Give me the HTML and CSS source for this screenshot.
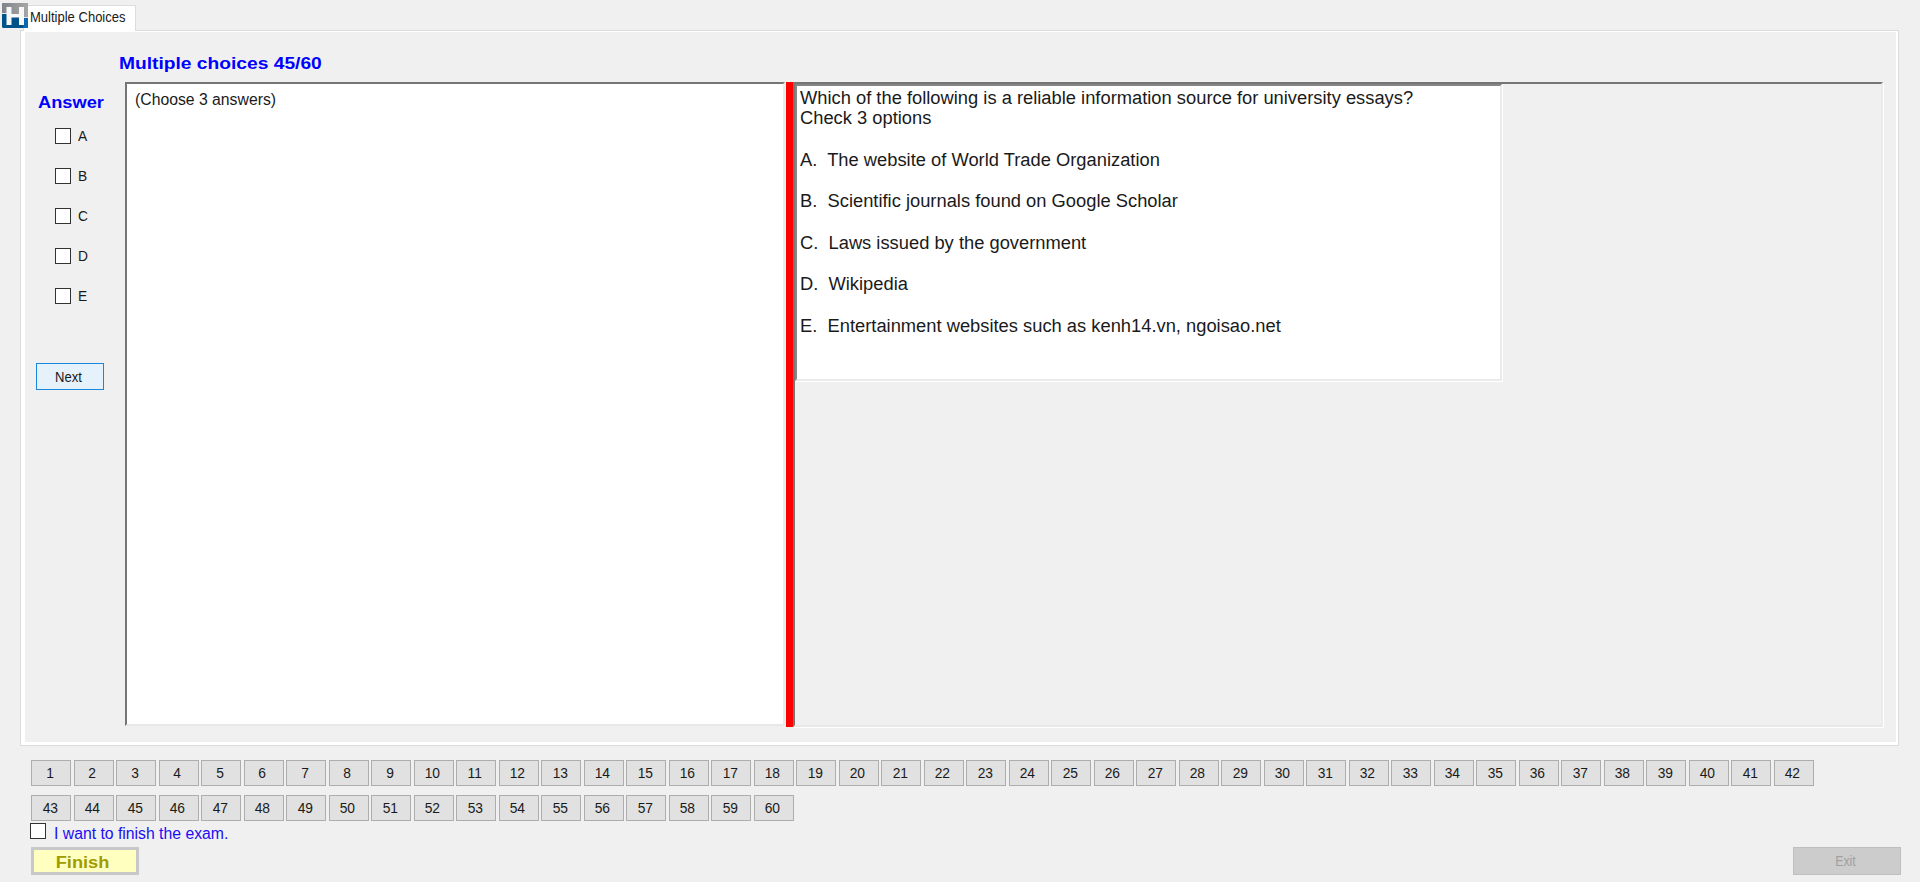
FILE: index.html
```html
<!DOCTYPE html>
<html lang="en">
<head>
<meta charset="utf-8">
<title>Multiple Choices</title>
<link rel="stylesheet" href="styles.css">
</head>
<body>
<svg class="logo" viewBox="0 0 26 25" width="26" height="25">
  <defs>
    <linearGradient id="steel" x1="0" x2="1" y1="0" y2="0"><stop offset="0" stop-color="#808488"/><stop offset="1" stop-color="#a6a6a6"/></linearGradient>
  </defs>
  <rect width="26" height="25" rx="1.5" fill="#00508a"/>
  <path d="M0 11V1.500Q0 0 1.500 0H24.500Q26 0 26 1.500V14H0z" fill="url(#steel)"/>
  <path d="M0 10H5V11H0z" fill="#e4e8ec"/>
  <path d="M0 11H5V14H0z" fill="#00508a"/>
  <path d="M21 14h5v1h-5z" fill="#e4e8ec"/>
  <path d="M21 15h5v8.500q0 1.500-1.500 1.500H21z" fill="#0869ae"/>
  <path d="M4.500 4h5v7h7.500V4h5v18h-5v-7.500H9.500V22h-5z" fill="#f7f7f7"/>
</svg>
<div class="tab"><span class="tab-text">Multiple Choices</span></div>
<main class="panel">
  <div class="panel-inner">
    <h1 class="heading"><span class="heading-text">Multiple choices 45/60</span></h1>
    <div class="work">
      <aside class="side">
        <div class="answer"><span class="answer-text">Answer</span></div>
        <label class="option"><i class="box"></i><span class="small">A</span></label>
        <label class="option"><i class="box"></i><span class="small">B</span></label>
        <label class="option"><i class="box"></i><span class="small">C</span></label>
        <label class="option"><i class="box"></i><span class="small">D</span></label>
        <label class="option"><i class="box"></i><span class="small">E</span></label>
        <button class="next"><span class="next-text">Next</span></button>
      </aside>
      <section class="pane pane-left"><span class="hint">(Choose 3 answers)</span></section>
      <div class="splitter"></div>
      <section class="pane pane-right">
        <div class="question">
          <p class="line">Which of the following is a reliable information source for university essays?</p>
          <p class="line">Check 3 options</p>
          <div class="choices">
            <p class="choice">A.  The website of World Trade Organization</p>
            <p class="choice">B.  Scientific journals found on Google Scholar</p>
            <p class="choice">C.  Laws issued by the government</p>
            <p class="choice">D.  Wikipedia</p>
            <p class="choice">E.  Entertainment websites such as kenh14.vn, ngoisao.net</p>
          </div>
        </div>
      </section>
    </div>
  </div>
</main>
<nav class="numbers" id="numbers"></nav>
<label class="confirm"><i class="box confirm-box"></i><span class="confirm-text">I want to finish the exam.</span></label>
<footer class="footer">
  <button class="finish"><span class="finish-text">Finish</span></button>
  <button class="exit" disabled><span class="exit-text">Exit</span></button>
</footer>
<script src="numbers.js"></script>
</body>
</html>
```
FILE: styles.css
```css
* { box-sizing: border-box; }
body {
  margin: 0;
  padding: 5px 21px 0 20px;
  height: 882px;
  overflow: hidden;
  background: #f0f0f0;
  color: #1a1a1a;
  font-family: "Liberation Sans", Arial, sans-serif;
}
span { display: inline-block; white-space: nowrap; }
button { font-family: inherit; padding: 0; border-radius: 0; margin: 0; }
h1, p { margin: 0; }

.logo { position: absolute; left: 2px; top: 3px; z-index: 3; }
.tab {
  position: relative;
  z-index: 2;
  width: 113px;
  height: 26px;
  margin-left: 3px;
  padding-left: 6px;
  background: #fff;
  border: 1px solid #dcdcdc;
  border-bottom: 0;
  font-size: 14px;
  line-height: 22px;
}
.tab-text { transform: scaleX(.93); transform-origin: left; }

.panel { height: 716px; margin-top: -1px; border: 1px solid #dcdcdc; }
.panel-inner { height: 714px; border: solid #fff; border-width: 1px 2px 3px 4px; }
.heading {
  height: 50px;
  padding: 20px 0 0 94px;
  color: #00f;
  font-size: 16px;
  line-height: 24px;
}
.heading-text { transform: scaleX(1.2); transform-origin: left; }
.work { display: flex; height: 645px; padding-right: 13px; }

.side { width: 100px; padding-top: 11px; }
.answer { padding-left: 13px; color: #00f; font-size: 16px; font-weight: bold; line-height: 20px; margin-bottom: 3px; }
.answer-text { transform: scaleX(1.14); transform-origin: left; }
.option { display: flex; align-items: center; gap: 7px; height: 40px; padding-left: 30px; font-size: 15px; }
.small { padding-bottom: 2px; transform: scaleX(.92); transform-origin: left; }
.box { width: 16px; height: 16px; background: #fff; border: 1px solid #333; flex: none; }
.next {
  display: block;
  width: 68px;
  height: 27px;
  margin: 47px 0 0 11px;
  padding-right: 4px;
  border: 1px solid #1a86dc;
  background: #e5f1fb;
  color: #1a1a1a;
  font-size: 15px;
}
.next-text { transform: scaleX(.87); }

.pane { border: 2px solid #757575; border-right-color: #ebebeb; border-bottom-color: #e8e8e8; }
.pane-left { width: 660px; height: 644px; background: #fff; padding: 4px 0 0 8px; font-size: 16px; line-height: 24px; }
.hint { transform: scaleX(.985); transform-origin: left; }
.splitter { width: 7px; margin-left: 1px; background: #f00; }
.pane-right { flex: 1; height: 645px; box-shadow: 1px 1px 0 #fff; }
.question {
  width: 707px;
  height: 297px;
  padding: 2px 0 0 3px;
  background: #fff;
  border: 2px solid #858585;
  border-right-color: #ebebeb;
  border-bottom-color: #ebebeb;
  box-shadow: 1px 1px 0 #fff;
  font-size: 18px;
}
.line, .choice { line-height: 20px; white-space: pre; transform: scaleX(1.018); transform-origin: left; }
.choices { margin-top: 12px; }
.choice { line-height: 41.4px; }

.numbers {
  display: grid;
  grid-template-columns: repeat(42, 40px);
  gap: 9px 2.5px;
  margin: 14px 0 0 11px;
}
.number {
  height: 26px;
  padding: 0 2px 0 0;
  border: 1px solid #adadad;
  background: #e1e1e1;
  color: #1a1a1a;
  font-size: 15px;
  line-height: 22px;
}
.number span { transform: scaleX(.92); }

.confirm { display: flex; height: 26px; padding-left: 10px; gap: 8px; color: #1c0cf5; font-size: 16px; line-height: 26px; }
.confirm-box { margin-top: 2px; }
.confirm-text { transform: scaleX(.985); transform-origin: left; }

.footer { display: flex; justify-content: space-between; margin: 0 -2px 0 11px; }
.finish, .exit { width: 108px; height: 28px; }
.finish {
  padding: 3px 4px 0 0;
  border: 3px solid #c8c8c8;
  background: #ffffc0;
  color: #a09c00;
  font-size: 16px;
  font-weight: bold;
  line-height: 18px;
}
.finish-text { transform: scaleX(1.14); }
.exit { padding: 0 3px 2px 0; border: 1px solid #bfbfbf; background: #ccc; color: #a0a0a0; font-size: 15px; }
.exit-text { transform: scaleX(.82); }
```
FILE: numbers.js
```js
const numbers = document.getElementById("numbers");
for (let n = 1; n <= 60; n++) {
  const button = document.createElement("button");
  button.className = "number";
  const label = document.createElement("span");
  label.textContent = n;
  button.append(label);
  numbers.append(button);
}
```
